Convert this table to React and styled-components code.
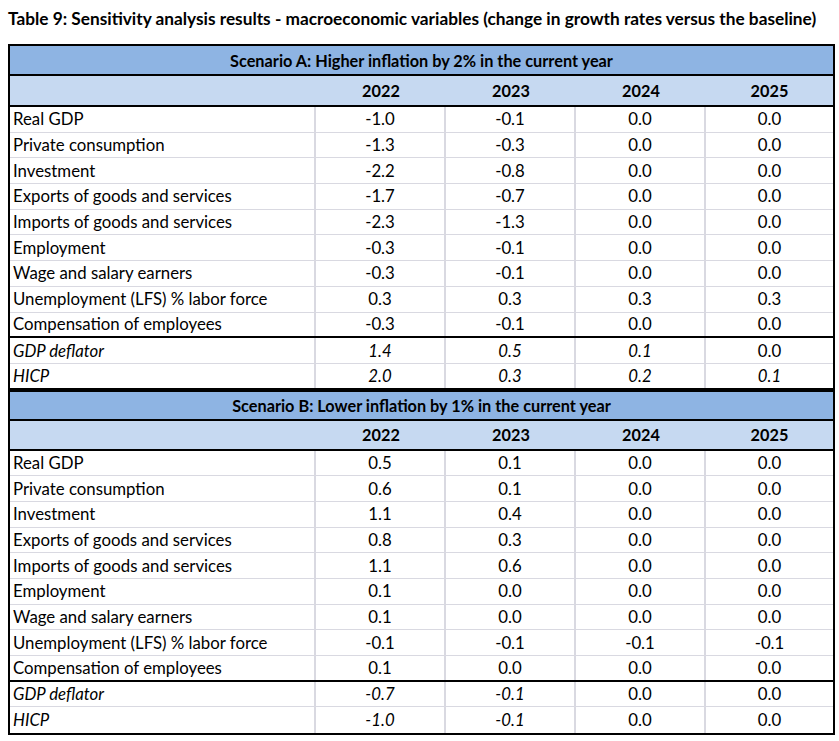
import React from "react";
import styled, { createGlobalStyle } from "styled-components";

const GlobalStyle = createGlobalStyle`
  body {
    margin: 0;
    background: #ffffff;
    font-family: Lato, "Open Sans", sans-serif;
    color: #000000;
  }
`;

const Page = styled.div`
  width: 839px;
  padding: 0 4px 0 8px;
  box-sizing: border-box;
`;

const Title = styled.h1`
  margin: 9px 0 15px 0;
  font-size: 17.25px;
  line-height: 20px;
  font-weight: 700;
  white-space: nowrap;
`;

const Frame = styled.div`
  width: 827px;
  box-sizing: border-box;
  border: 2px solid #000000;
`;

const ScenarioRow = styled.div`
  height: ${({ tall }) => (tall ? 31 : 30)}px;
  box-sizing: border-box;
  display: flex;
  align-items: center;
  justify-content: center;
  background: #8eb4e3;
  border-top: ${({ first }) => (first ? "none" : "2px solid #000000")};
  border-bottom: 2px solid #000000;
  font-size: 16.3px;
  font-weight: 700;
`;

const Grid = styled.div`
  display: grid;
  grid-template-columns: 306px 130px 130px 130px 127px;
  box-sizing: border-box;
`;

const YearRow = styled(Grid)`
  height: ${({ tall }) => (tall ? 31 : 30)}px;
  background: #c6d9f1;
  border-bottom: 2px solid #000000;
  align-items: center;
  font-size: 16.3px;
  font-weight: 700;
`;

const DataRow = styled(Grid)`
  height: 25.7px;
  border-bottom: ${({ strong }) => (strong ? "2px solid #000000" : "1px solid #d9d9e1")};
  &:last-child {
    border-bottom: none;
  }
`;

const Cell = styled.div`
  display: flex;
  align-items: center;
  justify-content: ${({ label }) => (label ? "flex-start" : "center")};
  padding-left: ${({ label }) => (label ? "3px" : "0")};
  padding-bottom: 1px;
  font-size: 16.8px;
  font-style: ${({ italic }) => (italic ? "italic" : "normal")};
  border-right: ${({ last }) => (last ? "none" : "2px solid #d9d9e1")};
  white-space: nowrap;
`;

const YearCell = styled.div`
  text-align: center;
`;

const labels = [
  "Real GDP",
  "Private consumption",
  "Investment",
  "Exports of goods and services",
  "Imports of goods and services",
  "Employment",
  "Wage and salary earners",
  "Unemployment (LFS) % labor force",
  "Compensation of employees",
  "GDP deflator",
  "HICP",
];

const scenarios = [
  {
    title: "Scenario A: Higher inflation by 2% in the current year",
    rows: [
      ["-1.0", "-0.1", "0.0", "0.0"],
      ["-1.3", "-0.3", "0.0", "0.0"],
      ["-2.2", "-0.8", "0.0", "0.0"],
      ["-1.7", "-0.7", "0.0", "0.0"],
      ["-2.3", "-1.3", "0.0", "0.0"],
      ["-0.3", "-0.1", "0.0", "0.0"],
      ["-0.3", "-0.1", "0.0", "0.0"],
      ["0.3", "0.3", "0.3", "0.3"],
      ["-0.3", "-0.1", "0.0", "0.0"],
      ["1.4", "0.5", "0.1", "0.0"],
      ["2.0", "0.3", "0.2", "0.1"],
    ],
  },
  {
    title: "Scenario B: Lower inflation by 1% in the current year",
    rows: [
      ["0.5", "0.1", "0.0", "0.0"],
      ["0.6", "0.1", "0.0", "0.0"],
      ["1.1", "0.4", "0.0", "0.0"],
      ["0.8", "0.3", "0.0", "0.0"],
      ["1.1", "0.6", "0.0", "0.0"],
      ["0.1", "0.0", "0.0", "0.0"],
      ["0.1", "0.0", "0.0", "0.0"],
      ["-0.1", "-0.1", "-0.1", "-0.1"],
      ["0.1", "0.0", "0.0", "0.0"],
      ["-0.7", "-0.1", "0.0", "0.0"],
      ["-1.0", "-0.1", "0.0", "0.0"],
    ],
  },
];

const years = ["2022", "2023", "2024", "2025"];

function Section({ scenario, first }) {
  return (
    <>
      <ScenarioRow first={first} tall={!first}>
        {scenario.title}
      </ScenarioRow>
      <YearRow tall={first}>
        <YearCell />
        {years.map((y) => (
          <YearCell key={y}>{y}</YearCell>
        ))}
      </YearRow>
      {scenario.rows.map((vals, i) => {
        // last two rows are the price indicators, set in italics (zeros stay upright)
        const italic = i >= 9;
        return (
          <DataRow key={labels[i]} strong={i === 8 || i === 10}>
            <Cell label italic={italic}>
              {labels[i]}
            </Cell>
            {vals.map((v, j) => (
              <Cell key={j} last={j === 3} italic={italic && v !== "0.0"}>
                {v}
              </Cell>
            ))}
          </DataRow>
        );
      })}
    </>
  );
}

export default function App() {
  return (
    <Page>
      <GlobalStyle />
      <Title>
        Table 9: Sensitivity analysis results - macroeconomic variables (change in growth rates
        versus the baseline)
      </Title>
      <Frame>
        {scenarios.map((s, i) => (
          <Section key={s.title} scenario={s} first={i === 0} />
        ))}
      </Frame>
    </Page>
  );
}
